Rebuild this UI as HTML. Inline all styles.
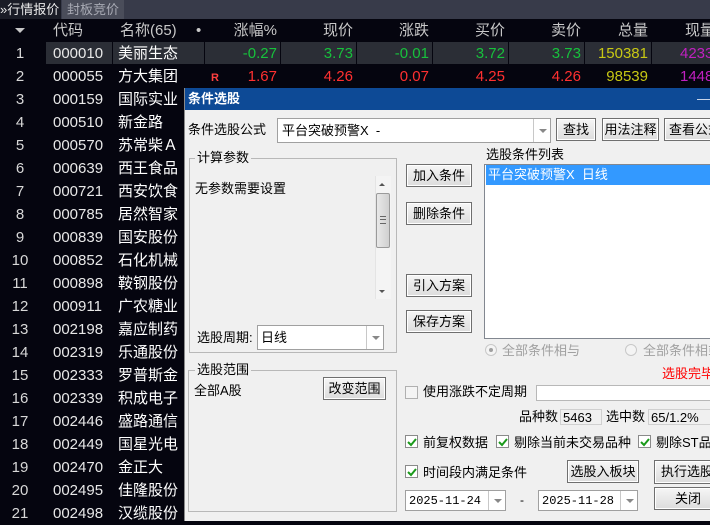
<!DOCTYPE html>
<html><head><meta charset="utf-8">
<style>
*{margin:0;padding:0;box-sizing:border-box}
body{width:710px;height:521px;overflow:hidden;background:#05050f;font-family:"Liberation Sans","Noto Sans CJK SC",sans-serif;position:relative}
.a{position:absolute;white-space:nowrap}
.t{font-size:15px;line-height:23px}
.row{position:absolute;left:0;width:710px;height:23px}
.i{position:absolute;left:0;width:40px;text-align:center;color:#d8d8d8;font-size:15px;line-height:23px}
.c{position:absolute;left:53px;color:#e8e8e8;font-size:15px;line-height:23px}
.n{position:absolute;left:118px;color:#fff;font-size:15px;line-height:23px;white-space:nowrap}
.d{font-size:12px;color:#000;line-height:16px}
.btn{position:absolute;background:linear-gradient(#f6f6f6,#dcdcdc);border:1px solid #6f6f6f;box-shadow:inset 0 0 0 1px #fff;font-size:12px;color:#000;text-align:center;white-space:nowrap}
.box{position:absolute;background:#fff;border:1px solid #a0a0a0}
.cb{position:absolute;width:13px;height:13px;border:1px solid #8a8a8a;background:#fff}
.dd{position:absolute;top:0;right:0;bottom:0;width:17px;border-left:1px solid #c8c8c8;background:#fff}
.dd:after{content:"";position:absolute;left:5px;top:50%;margin-top:-2px;border-left:4px solid transparent;border-right:4px solid transparent;border-top:4px solid #888}
.grp{position:absolute;border:1px solid #b8b8b8}
.gl{position:absolute;background:#f0f0f0;font-size:12px;line-height:14px;padding:0 2px;color:#000;white-space:nowrap}
</style></head><body>
<div class="a" style="left:0;top:0;width:710px;height:19px;background:#383b4a"></div>
<div class="a" style="left:0;top:0;width:61px;height:19px;background:#1a1c26;color:#e8e8e8;font-size:13px;line-height:19px">»行情报价</div>
<div class="a" style="left:62px;top:0;width:62px;height:19px;background:#4a4d5a;color:#a8aab4;font-size:13px;line-height:19px;text-align:center">封板竞价</div>
<div class="row" style="top:19px;height:23px;color:#c8c8c8">
<div class="a" style="left:15px;top:9px;border-left:5px solid transparent;border-right:5px solid transparent;border-top:5px solid #c8c8c8"></div>
<div class="a t" style="left:53px">代码</div>
<div class="a t" style="left:120px">名称(65)</div>
<div class="a t" style="left:196px">•</div>
<div class="a t" style="right:433px">涨幅%</div>
<div class="a t" style="right:357px">现价</div>
<div class="a t" style="right:281px">涨跌</div>
<div class="a t" style="right:205px">买价</div>
<div class="a t" style="right:129px">卖价</div>
<div class="a t" style="right:62px">总量</div>
<div class="a t" style="left:685px">现量</div>
</div>
<div class="row" style="top:42px">
<div class="a" style="left:46px;top:0;width:664px;height:22px;background:#2b2e36"></div>
<div class="a" style="left:112px;top:0;width:1px;height:22px;background:#05050f"></div>
<div class="a" style="left:204px;top:0;width:1px;height:22px;background:#05050f"></div>
<div class="a" style="left:280px;top:0;width:1px;height:22px;background:#05050f"></div>
<div class="a" style="left:356px;top:0;width:1px;height:22px;background:#05050f"></div>
<div class="a" style="left:432px;top:0;width:1px;height:22px;background:#05050f"></div>
<div class="a" style="left:508px;top:0;width:1px;height:22px;background:#05050f"></div>
<div class="a" style="left:584px;top:0;width:1px;height:22px;background:#05050f"></div>
<div class="a" style="left:651px;top:0;width:1px;height:22px;background:#05050f"></div>
<div class="i">1</div><div class="c">000010</div><div class="n">美丽生态</div>
<div class="a t" style="right:433px;color:#17c13c">-0.27</div>
<div class="a t" style="right:357px;color:#17c13c">3.73</div>
<div class="a t" style="right:281px;color:#17c13c">-0.01</div>
<div class="a t" style="right:205px;color:#17c13c">3.72</div>
<div class="a t" style="right:129px;color:#17c13c">3.73</div>
<div class="a t" style="right:62px;color:#c8c814">150381</div>
<div class="a t" style="left:680px;color:#c020c0">4233</div>
</div>
<div class="row" style="top:65px">
<div class="i">2</div><div class="c">000055</div><div class="n">方大集团</div>
<div class="a" style="left:211px;top:5px;font-size:11px;font-weight:bold;color:#ff4040;line-height:16px">R</div>
<div class="a t" style="right:433px;color:#ff3030">1.67</div>
<div class="a t" style="right:357px;color:#ff3030">4.26</div>
<div class="a t" style="right:281px;color:#ff3030">0.07</div>
<div class="a t" style="right:205px;color:#ff3030">4.25</div>
<div class="a t" style="right:129px;color:#ff3030">4.26</div>
<div class="a t" style="right:62px;color:#c8c814">98539</div>
<div class="a t" style="left:680px;color:#c020c0">1448</div>
</div>
<div class="row" style="top:88px"><div class="i">3</div><div class="c">000159</div><div class="n">国际实业</div></div>
<div class="row" style="top:111px"><div class="i">4</div><div class="c">000510</div><div class="n">新金路</div></div>
<div class="row" style="top:134px"><div class="i">5</div><div class="c">000570</div><div class="n">苏常柴Ａ</div></div>
<div class="row" style="top:157px"><div class="i">6</div><div class="c">000639</div><div class="n">西王食品</div></div>
<div class="row" style="top:180px"><div class="i">7</div><div class="c">000721</div><div class="n">西安饮食</div></div>
<div class="row" style="top:203px"><div class="i">8</div><div class="c">000785</div><div class="n">居然智家</div></div>
<div class="row" style="top:226px"><div class="i">9</div><div class="c">000839</div><div class="n">国安股份</div></div>
<div class="row" style="top:249px"><div class="i">10</div><div class="c">000852</div><div class="n">石化机械</div></div>
<div class="row" style="top:272px"><div class="i">11</div><div class="c">000898</div><div class="n">鞍钢股份</div></div>
<div class="row" style="top:295px"><div class="i">12</div><div class="c">000911</div><div class="n">广农糖业</div></div>
<div class="row" style="top:318px"><div class="i">13</div><div class="c">002198</div><div class="n">嘉应制药</div></div>
<div class="row" style="top:341px"><div class="i">14</div><div class="c">002319</div><div class="n">乐通股份</div></div>
<div class="row" style="top:364px"><div class="i">15</div><div class="c">002333</div><div class="n">罗普斯金</div></div>
<div class="row" style="top:387px"><div class="i">16</div><div class="c">002339</div><div class="n">积成电子</div></div>
<div class="row" style="top:410px"><div class="i">17</div><div class="c">002446</div><div class="n">盛路通信</div></div>
<div class="row" style="top:433px"><div class="i">18</div><div class="c">002449</div><div class="n">国星光电</div></div>
<div class="row" style="top:456px"><div class="i">19</div><div class="c">002470</div><div class="n">金正大</div></div>
<div class="row" style="top:479px"><div class="i">20</div><div class="c">002495</div><div class="n">佳隆股份</div></div>
<div class="row" style="top:502px"><div class="i">21</div><div class="c">002498</div><div class="n">汉缆股份</div></div>

<div class="a" style="left:184px;top:88px;width:526px;height:433px;background:#f0f0f0;border-left:1px solid #8a8a8a"></div>
<div class="a" style="left:185px;top:88px;width:525px;height:22px;background:#0d4a96;color:#fff;font-size:13px;font-weight:bold;line-height:22px;padding-left:3px">条件选股</div>
<div class="a" style="left:697px;top:99px;width:13px;height:1px;background:#c8d4e8"></div>

<div class="a d" style="left:188px;top:122px;font-size:13px">条件选股公式</div>
<div class="box" style="left:277px;top:118px;width:274px;height:25px"><div class="a d" style="left:4px;top:4px;font-size:13px">平台突破预警X&nbsp; -</div><div class="dd"></div></div>
<div class="btn" style="left:556px;top:118px;width:40px;height:23px;line-height:21px;font-size:13px">查找</div>
<div class="btn" style="left:602px;top:118px;width:57px;height:23px;line-height:21px;font-size:13px">用法注释</div>
<div class="btn" style="left:664px;top:118px;width:60px;height:23px;line-height:21px;text-align:left;padding-left:4px;font-size:13px">查看公式</div>

<div class="grp" style="left:189px;top:158px;width:208px;height:195px"></div>
<div class="gl" style="left:195px;top:151px;font-size:13px">计算参数</div>
<div class="a d" style="left:195px;top:181px;font-size:13px">无参数需要设置</div>
<div class="a" style="left:375px;top:176px;width:16px;height:123px;background:#f4f4f4;border-left:1px solid #e4e4e4"></div>
<div class="a" style="left:379px;top:183px;border-left:3px solid transparent;border-right:3px solid transparent;border-bottom:3px solid #555"></div>
<div class="a" style="left:379px;top:290px;border-left:3px solid transparent;border-right:3px solid transparent;border-top:3px solid #555"></div>
<div class="a" style="left:376px;top:193px;width:14px;height:55px;background:linear-gradient(90deg,#e8e8e8,#d0d0d0);border:1px solid #9a9a9a;border-radius:2px"></div>
<div class="a" style="left:380px;top:216px;width:6px;height:8px;border-top:1px solid #666;border-bottom:1px solid #666"></div>
<div class="a" style="left:380px;top:219px;width:6px;height:1px;background:#666"></div>
<div class="a d" style="left:197px;top:330px;font-size:13px">选股周期:</div>
<div class="box" style="left:257px;top:325px;width:127px;height:25px"><div class="a d" style="left:3px;top:4px;font-size:13px">日线</div><div class="dd"></div></div>

<div class="btn" style="left:406px;top:164px;width:66px;height:23px;line-height:21px;font-size:13px">加入条件</div>
<div class="btn" style="left:406px;top:202px;width:66px;height:23px;line-height:21px;font-size:13px">删除条件</div>
<div class="btn" style="left:406px;top:274px;width:66px;height:23px;line-height:21px;font-size:13px">引入方案</div>
<div class="btn" style="left:406px;top:310px;width:66px;height:23px;line-height:21px;font-size:13px">保存方案</div>

<div class="a d" style="left:486px;top:147px;font-size:13px">选股条件列表</div>
<div class="box" style="left:484px;top:164px;width:230px;height:175px;border-color:#828790"></div>
<div class="a" style="left:486px;top:165px;width:224px;height:20px;background:#3399ff;color:#fff;font-size:13px;line-height:20px;padding-left:2px">平台突破预警X&nbsp; 日线</div>

<div class="a" style="left:485px;top:344px;width:12px;height:12px;border-radius:50%;border:1px solid #c8c8c8;background:#f4f4f4"></div>
<div class="a" style="left:489px;top:348px;width:4px;height:4px;border-radius:50%;background:#a0a0a0"></div>
<div class="a d" style="left:502px;top:343px;color:#a0a0a0;font-size:13px">全部条件相与</div>
<div class="a" style="left:625px;top:344px;width:12px;height:12px;border-radius:50%;border:1px solid #c8c8c8;background:#f4f4f4"></div>
<div class="a d" style="left:643px;top:343px;color:#a0a0a0;font-size:13px">全部条件相或</div>
<div class="a d" style="left:662px;top:366px;color:#ff0000;font-size:13px">选股完毕</div>

<div class="grp" style="left:188px;top:370px;width:209px;height:142px"></div>
<div class="gl" style="left:195px;top:363px;font-size:13px">选股范围</div>
<div class="a d" style="left:194px;top:383px;font-size:13px">全部A股</div>
<div class="btn" style="left:323px;top:377px;width:63px;height:23px;line-height:21px;font-size:13px">改变范围</div>

<div class="cb" style="left:405px;top:386px;border-color:#b0b0b0;background:#f4f4f4"></div>
<div class="a d" style="left:423px;top:384px;font-size:13px">使用涨跌不定周期</div>
<div class="a" style="left:536px;top:385px;width:180px;height:16px;background:#fff;border:1px solid #b8b8b8"></div>

<div class="a d" style="left:519px;top:409px;font-size:13px">品种数</div>
<div class="a d" style="left:560px;top:409px;width:42px;height:16px;border:1px solid #d0d0d0;padding-left:2px;background:#f0f0f0;font-size:13px">5463</div>
<div class="a d" style="left:606px;top:409px;font-size:13px">选中数</div>
<div class="a d" style="left:648px;top:409px;width:70px;height:16px;border:1px solid #d0d0d0;padding-left:2px;background:#f0f0f0;font-size:13px">65/1.2%</div>

<div class="cb" style="left:405px;top:435px"></div>
<div class="cb" style="left:496px;top:435px"></div>
<div class="cb" style="left:638px;top:435px"></div>
<div class="cb" style="left:405px;top:465px"></div>
<svg style="position:absolute;left:0;top:0" width="710" height="521">
<g fill="none" stroke="#1a9a1a" stroke-width="2">
<path d="M408 442 l3 3 l5 -6"/><path d="M499 442 l3 3 l5 -6"/><path d="M641 442 l3 3 l5 -6"/><path d="M408 472 l3 3 l5 -6"/>
</g></svg>
<div class="a d" style="left:423px;top:435px;font-size:13px">前复权数据</div>
<div class="a d" style="left:514px;top:435px;font-size:13px">剔除当前未交易品种</div>
<div class="a d" style="left:656px;top:435px;font-size:13px">剔除ST品种</div>
<div class="a d" style="left:423px;top:465px;font-size:13px">时间段内满足条件</div>
<div class="btn" style="left:567px;top:460px;width:72px;height:23px;line-height:21px;font-size:13px">选股入板块</div>
<div class="btn" style="left:654px;top:460px;width:62px;height:24px;line-height:22px;text-align:left;padding-left:6px;font-size:13px">执行选股</div>

<div class="box" style="left:405px;top:490px;width:101px;height:21px"><div class="a d" style="left:3px;top:2px;font-family:'Liberation Mono',monospace;font-size:12px">2025-11-24</div><div class="dd"></div></div>
<div class="a d" style="left:520px;top:492px">-</div>
<div class="box" style="left:538px;top:490px;width:100px;height:21px"><div class="a d" style="left:3px;top:2px;font-family:'Liberation Mono',monospace;font-size:12px">2025-11-28</div><div class="dd"></div></div>
<div class="btn" style="left:654px;top:487px;width:62px;height:23px;line-height:21px;text-align:left;padding-left:20px;font-size:13px">关闭</div>
</body></html>
